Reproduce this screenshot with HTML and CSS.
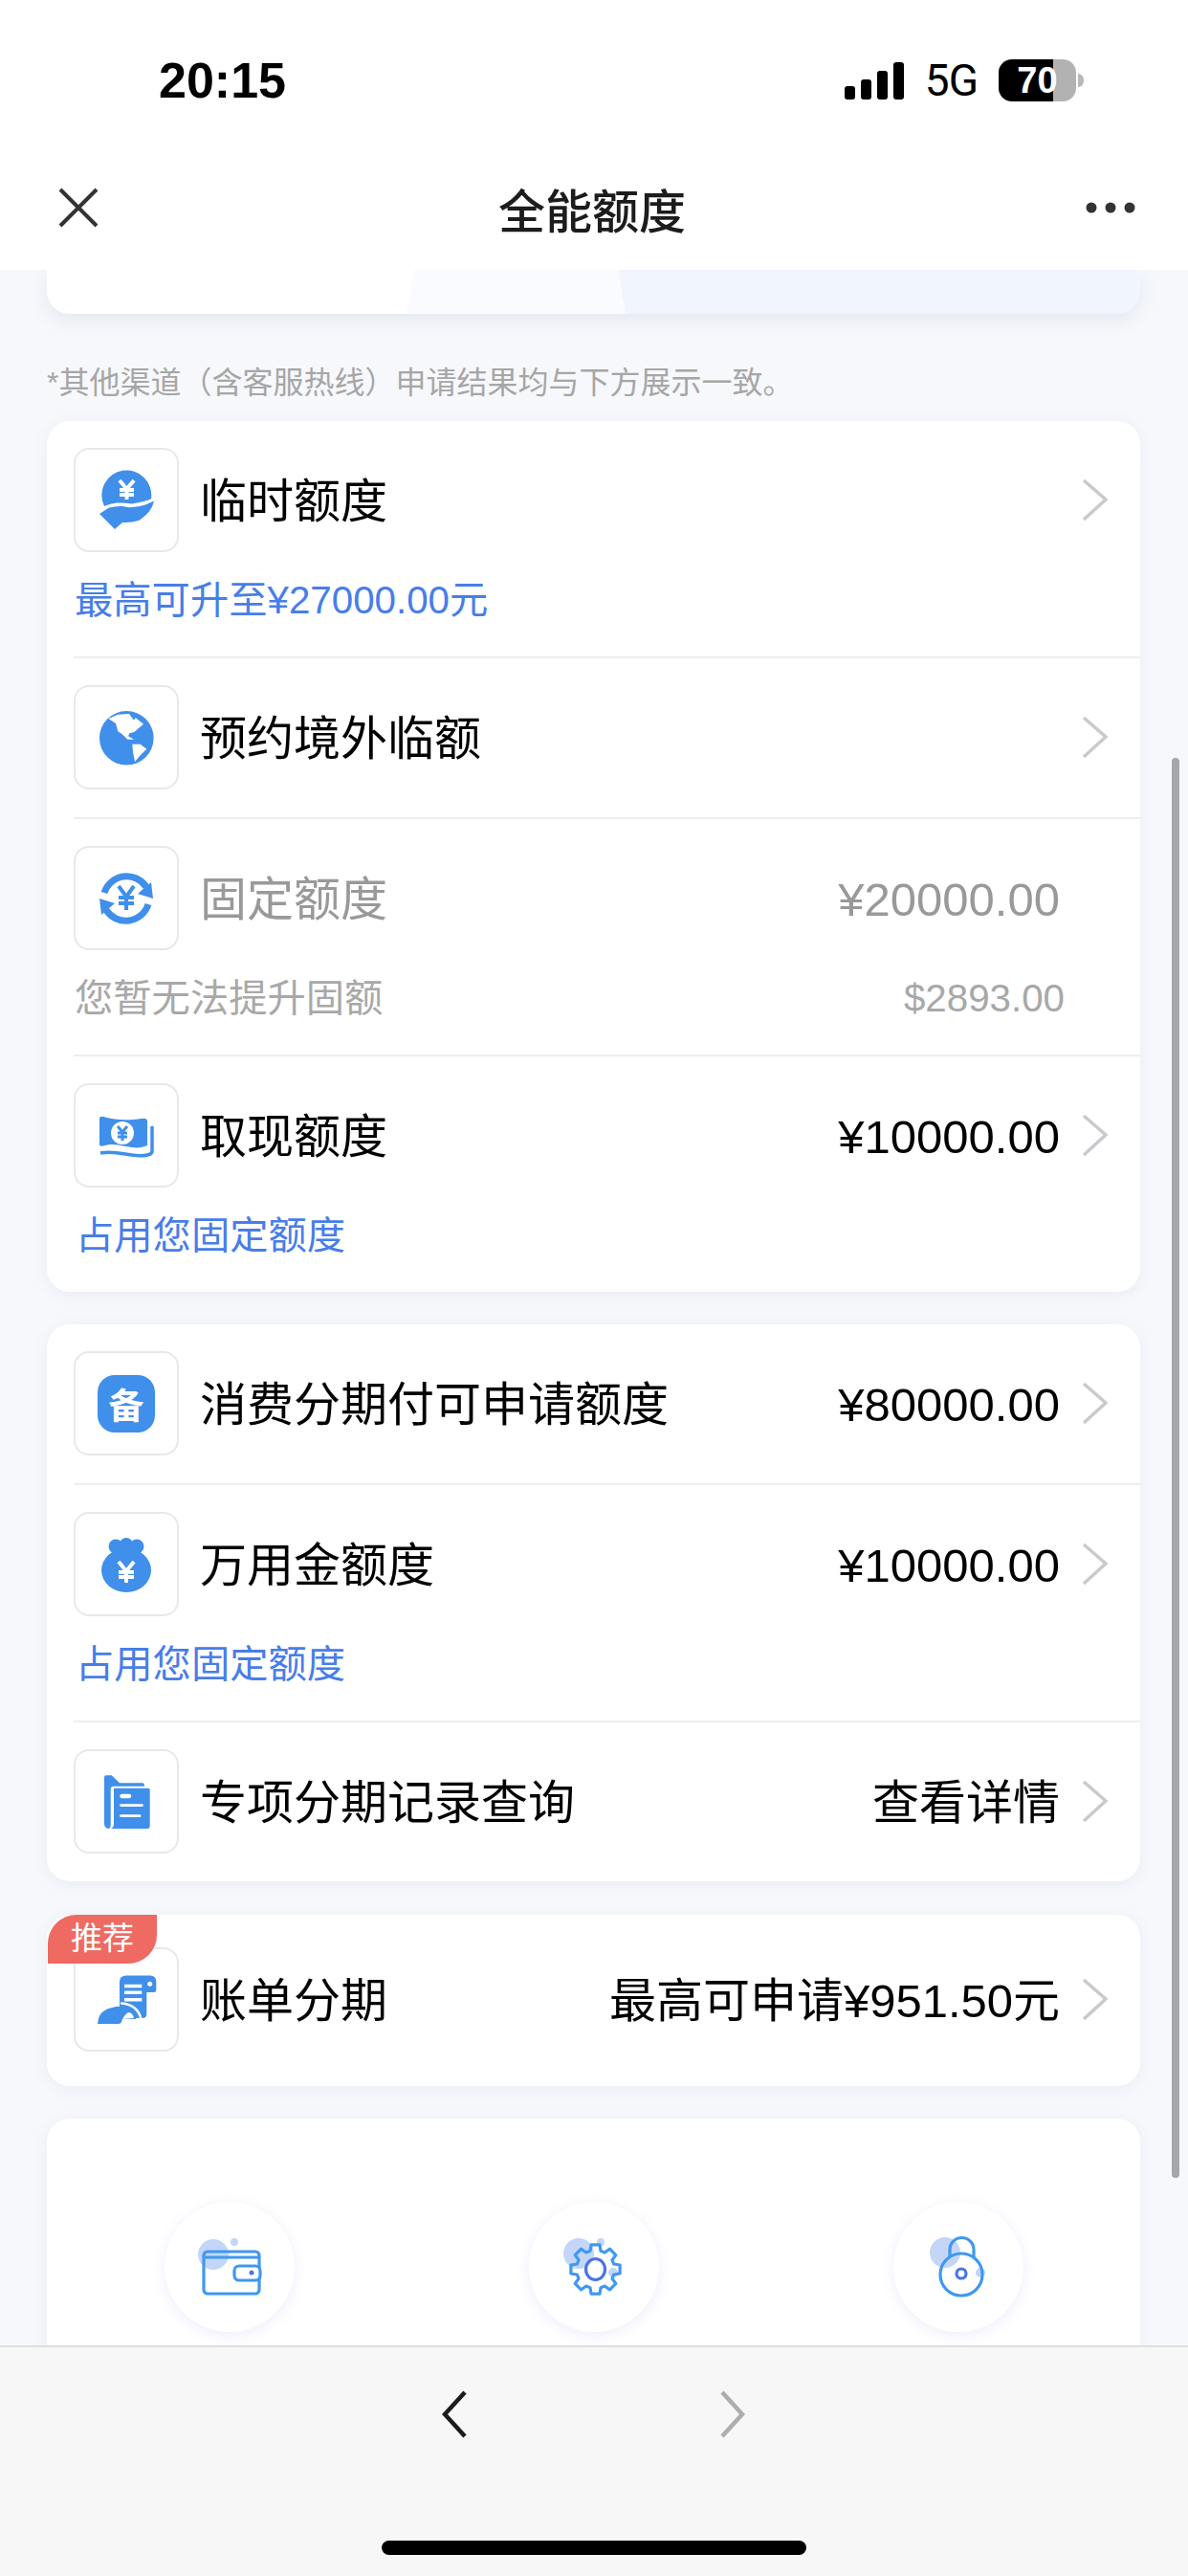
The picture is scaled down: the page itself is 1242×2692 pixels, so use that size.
FILE: index.html
```html
<!DOCTYPE html>
<html lang="zh">
<head>
  <meta charset="UTF-8">
  <title>全能额度</title>
  <link rel="stylesheet" href="styles.css">
</head>
<body>
  <div class="screen">
    <div class="status">
      <span class="time">20:15</span>
      <div class="status-right">
        <div class="signal"><i></i><i></i><i></i><i></i></div>
        <span class="net">5G</span>
        <div class="battery-wrap">
          <div class="battery">70</div>
          <div class="battery-tip"></div>
        </div>
      </div>
    </div>

    <div class="nav">
      <svg class="nav-close" viewBox="0 0 42 42"><path d="M2 2 40 40M40 2 2 40"/></svg>
      <span class="nav-title">全能额度</span>
      <svg class="nav-more" viewBox="0 0 52 12"><circle cx="6" cy="6" r="5.5"/><circle cx="26" cy="6" r="5.5"/><circle cx="46" cy="6" r="5.5"/></svg>
    </div>

    <div class="content">
      <div class="top-card"></div>
      <div class="note">*其他渠道（含客服热线）申请结果均与下方展示一致。</div>

      <div class="card">
        <div class="row">
          <div class="row-main">
            <div class="icon-box">
              <svg class="icon" viewBox="0 0 60 60">
                <path d="M7 36A26 26 0 1 1 56 28.500Q50 31 36 33.500 28 32 20 32.500 13 33 7 36Z"/>
                <path d="M2 44 12 37.500Q20 35.500 26 36 31 37.500 36 37 43 36.500 50 34.500L59 30.500Q58 36 54 41.500 48 48 43 51 35 53.500 26 53L18 60Z"/>
                <path class="yen" d="M23 9 30.500 18 38 9M30.500 18V29M23 19H38M23 24H38"/>
              </svg>
            </div>
            <span class="row-title">临时额度</span>
            <svg class="chev" viewBox="0 0 27 45"><path d="M2 2 25 22 2 43"/></svg>
          </div>
          <div class="row-sub"><span class="link">最高可升至¥27000.00元</span></div>
        </div>

        <div class="row">
          <div class="row-main">
            <div class="icon-box">
              <svg class="icon" viewBox="0 0 60 60">
                <circle cx="30.300" cy="30.300" r="28.300"/>
                <path class="land" d="M11.300 10 21.300 5.700 33 5 38 11.700 39.700 9 48 15.700 43 20 38 24.300 33.700 25 32 28.300 38 31.700 31.300 31.700 26.300 26.700 21.300 23.300 19 15Z"/>
                <path class="land" d="M36.300 36.700 44.700 36.700 51.300 41.700 44.700 48.300 39 55 37 45Z"/>
              </svg>
            </div>
            <span class="row-title">预约境外临额</span>
            <svg class="chev" viewBox="0 0 27 45"><path d="M2 2 25 22 2 43"/></svg>
          </div>
        </div>

        <div class="row">
          <div class="row-main">
            <div class="icon-box">
              <svg class="icon" viewBox="0 0 60 60">
                <path class="ring" d="M7 24A24.500 24.500 0 0 1 51 18"/>
                <path d="M58 30 42 25 56 13Z"/>
                <path class="ring" d="M53 36A24.500 24.500 0 0 1 9 42"/>
                <path d="M2 30 18 35 4 47Z"/>
                <path class="yen blue" d="M22 17 30 28 38 17M30 28V42M22 29H38M22 35H38"/>
              </svg>
            </div>
            <span class="row-title muted">固定额度</span>
            <span class="row-value muted">¥20000.00</span>
            <span class="chev-space"></span>
          </div>
          <div class="row-sub">
            <span class="sub-muted">您暂无法提升固额</span>
            <span class="sub-muted sub-amount">$2893.00</span>
          </div>
        </div>

        <div class="row">
          <div class="row-main">
            <div class="icon-box">
              <svg class="icon" viewBox="0 0 60 60">
                <path d="M2 12Q2 9 6 10C20 14 32 14 46 12Q52 11 52 15V40C38 47 22 36 8 40Q2 42 2 39Z"/>
                <path class="ring thin" d="M57 20V46Q57 49 52 50C36 54 22 44 3 48"/>
                <circle class="cut" cx="26" cy="27" r="12"/>
                <path class="yen blue small" d="M21 20 26 26 31 20M26 26V35M21 27H31M21 31H31"/>
              </svg>
            </div>
            <span class="row-title">取现额度</span>
            <span class="row-value">¥10000.00</span>
            <svg class="chev" viewBox="0 0 27 45"><path d="M2 2 25 22 2 43"/></svg>
          </div>
          <div class="row-sub"><span class="link link-indent">占用您固定额度</span></div>
        </div>
      </div>

      <div class="card">
        <div class="row">
          <div class="row-main">
            <div class="icon-box">
              <div class="bei">备</div>
            </div>
            <span class="row-title">消费分期付可申请额度</span>
            <span class="row-value">¥80000.00</span>
            <svg class="chev" viewBox="0 0 27 45"><path d="M2 2 25 22 2 43"/></svg>
          </div>
        </div>

        <div class="row">
          <div class="row-main">
            <div class="icon-box">
              <svg class="icon" viewBox="0 0 60 60">
                <circle cx="19" cy="11" r="7.500"/>
                <circle cx="30" cy="9" r="7"/>
                <circle cx="41" cy="11" r="7.500"/>
                <ellipse cx="30" cy="36" rx="26" ry="23"/>
                <path class="yen" d="M22 27 30 37 38 27M30 37V49M22 38H38M22 43H38"/>
              </svg>
            </div>
            <span class="row-title">万用金额度</span>
            <span class="row-value">¥10000.00</span>
            <svg class="chev" viewBox="0 0 27 45"><path d="M2 2 25 22 2 43"/></svg>
          </div>
          <div class="row-sub"><span class="link link-indent">占用您固定额度</span></div>
        </div>

        <div class="row">
          <div class="row-main">
            <div class="icon-box">
              <svg class="icon" viewBox="0 0 60 60">
                <path d="M7 4Q7 2.300 9 2.300H14.700L23 10.300H47Q49 10.300 49 13.700H17Q13.700 13.700 13.700 17V54Q13.700 58 11 58 7 57 7 53Z"/>
                <path d="M17 15.700H53Q54.700 15.700 54.700 17.500V55Q54.700 58 52 58H13.700Q17 57 17 53Z"/>
                <path class="doc-lines pill" d="M25.500 24H33"/>
                <path class="doc-lines" d="M24.500 33.600H46.500M24.500 44.700H44"/>
              </svg>
            </div>
            <span class="row-title">专项分期记录查询</span>
            <span class="row-value">查看详情</span>
            <svg class="chev" viewBox="0 0 27 45"><path d="M2 2 25 22 2 43"/></svg>
          </div>
        </div>
      </div>

      <div class="card card-bill">
        <span class="badge">推荐</span>
        <div class="row">
          <div class="row-main">
            <div class="icon-box">
              <svg class="icon" viewBox="0 0 60 60">
                <path d="M23 11Q23 4.500 30 4.500H55Q61.300 4.500 61.300 11V20Q61.300 22 59 22H51.300V45Q51.300 49 47 49H30L23 37Z"/>
                <path d="M0 55Q1 45 6 42 12 37 26 36.500 38 38 40 48V50H26L25 53Q24 55 22 55Z"/>
                <path class="bill-lines" d="M28 15.500H46.300M28 22.200H46.300M28 29.800H46.300"/>
                <path class="doc-lines thin" d="M25 33.500Q42 35 45.500 50"/>
                <path class="cut" d="M26 50Q30 43 33 43 37 44 38 49Z"/>
                <circle class="cut" cx="54.700" cy="13.200" r="2.500"/>
              </svg>
            </div>
            <span class="row-title">账单分期</span>
            <span class="row-value">最高可申请¥951.50元</span>
            <svg class="chev" viewBox="0 0 27 45"><path d="M2 2 25 22 2 43"/></svg>
          </div>
        </div>
      </div>

      <div class="card card-tools">
        <div class="tool">
          <svg class="tool-icon" viewBox="0 0 80 80">
            <circle class="blob" cx="23" cy="27" r="16"/>
            <circle class="blob" cx="45" cy="14" r="4"/>
            <rect class="line" x="13" y="24" width="58" height="44" rx="4"/>
            <path class="line" d="M13 30H71"/>
            <rect class="tool-clasp" x="45" y="39" width="27" height="15" rx="5"/>
            <circle class="dot" cx="63" cy="46" r="2.500"/>
          </svg>
        </div>
        <div class="tool">
          <svg class="tool-icon" viewBox="0 0 80 80">
            <circle class="blob" cx="24" cy="26" r="16"/>
            <circle class="blob" cx="60" cy="46" r="5"/>
            <circle class="blob" cx="47" cy="14" r="4"/>
            <path class="line" transform="translate(41.500 42.500)" d="M-4.500-25.600 4.500-25.600 5.500-19.200 9.700-17.500 14.900-21.300 21.300-14.900 17.500-9.700 19.200-5.500 25.600-4.500 25.600 4.500 19.200 5.500 17.500 9.700 21.300 14.900 14.900 21.300 9.700 17.500 5.500 19.200 4.500 25.600-4.500 25.600-5.500 19.200-9.700 17.500-14.900 21.300-21.300 14.900-17.500 9.700-19.200 5.500-25.600 4.500-25.600-4.500-19.200-5.500-17.500-9.700-21.300-14.900-14.900-21.300-9.700-17.500-5.500-19.200Z"/>
            <ellipse class="line-inner" cx="41.500" cy="42.500" rx="10" ry="11"/>
          </svg>
        </div>
        <div class="tool">
          <svg class="tool-icon" viewBox="0 0 80 80">
            <circle class="blob" cx="26" cy="25" r="16"/>
            <circle class="blob" cx="63" cy="46" r="5"/>
            <path class="line" d="M31 30V22A12.500 12.500 0 0 1 56 22V30"/>
            <circle class="line" cx="43" cy="48" r="22"/>
            <circle class="line-inner" cx="43" cy="47" r="5"/>
          </svg>
        </div>
      </div>
    </div>

    <div class="scroll-thumb"></div>

    <div class="footer">
      <div class="footer-nav">
        <svg class="footer-chev" viewBox="0 0 26 50"><path d="M24 2 3 25 24 48"/></svg>
        <svg class="footer-chev off" viewBox="0 0 26 50"><path d="M2 2 23 25 2 48"/></svg>
      </div>
      <div class="home-bar"></div>
    </div>
  </div>
</body>
</html>
```

FILE: styles.css
```css
* {
  box-sizing: border-box;
}

html, body {
  margin: 0;
  padding: 0;
}

body {
  font-family: "Liberation Sans", "Noto Sans CJK SC", sans-serif;
  color: #000;
}

.screen {
  position: relative;
  width: 1242px;
  height: 2692px;
  display: flex;
  flex-direction: column;
  overflow: hidden;
  background: #f6f8fc;
}

/* status bar */
.status {
  height: 152px;
  padding: 16px 109px 0 166px;
  display: flex;
  align-items: center;
  justify-content: space-between;
  background: #fff;
}

.time {
  font-size: 52px;
  font-weight: bold;
}

.status-right {
  display: flex;
  align-items: center;
  gap: 22px;
}

.signal {
  display: flex;
  align-items: flex-end;
  gap: 6px;
  height: 39px;
}

.signal i {
  width: 11px;
  border-radius: 3px;
  background: #000;
}

.signal i:nth-child(1) { height: 14px; }
.signal i:nth-child(2) { height: 21px; }
.signal i:nth-child(3) { height: 30px; }
.signal i:nth-child(4) { height: 39px; }

.net {
  font-family: Roboto, sans-serif;
  font-size: 46px;
  letter-spacing: -1px;
}

.battery-wrap {
  display: flex;
  align-items: center;
  gap: 2px;
}

.battery {
  width: 81px;
  height: 44px;
  border-radius: 14px;
  display: flex;
  align-items: center;
  justify-content: center;
  background: linear-gradient(90deg, #000 57px, #b2b2b2 57px);
  color: #fff;
  font-size: 38px;
  font-weight: bold;
}

.battery-tip {
  width: 6px;
  height: 14px;
  border-radius: 0 6px 6px 0;
  background: #b8b8b8;
}

/* nav bar */
.nav {
  height: 130px;
  padding: 0 55px 0 61px;
  display: flex;
  align-items: center;
  justify-content: space-between;
  background: #fff;
  position: relative;
  z-index: 2;
}

.nav-close {
  width: 42px;
  height: 42px;
  fill: none;
  stroke: #333;
  stroke-width: 4;
}

.nav-title {
  font-size: 49px;
  font-weight: 500;
  color: #1c1c1c;
}

.nav-more {
  width: 52px;
  height: 12px;
  fill: #333;
}

/* scrolling area */
.content {
  flex: 1;
  min-height: 0;
  padding: 0 50px 0 49px;
  overflow: hidden;
}

.top-card {
  height: 46px;
  border-radius: 0 0 24px 24px;
  background:
    linear-gradient(80deg, transparent 596px, #f1f5fd 596px),
    linear-gradient(100deg, #fff 378px, #f9fbfe 378px);
  box-shadow: 0 6px 20px rgba(70, 85, 120, 0.1);
}

.note {
  margin: 47px 0 15px;
  height: 50px;
  line-height: 50px;
  font-size: 32px;
  color: #a6a6a6;
}

.card {
  position: relative;
  margin-bottom: 34px;
  border-radius: 24px;
  background: #fff;
  box-shadow: 0 3px 16px rgba(70, 85, 120, 0.07);
}

.row {
  margin-left: 28px;
  padding: 28px 34px 33px 0;
}

.row + .row {
  border-top: 2px solid #eeeeee;
}

.row-main {
  display: flex;
  align-items: center;
}

.row-main:only-child {
  margin-bottom: -4px;
}

.icon-box {
  flex-shrink: 0;
  width: 110px;
  height: 109px;
  margin-right: 22px;
  border: 2px solid #e8e8e8;
  border-radius: 16px;
  display: flex;
  align-items: center;
  justify-content: center;
  background: #fff;
}

.icon {
  width: 60px;
  height: 60px;
  fill: #408fea;
  overflow: visible;
}

.icon .cut { fill: #fff; }
.icon .land { fill: #fff; }

.icon .yen {
  fill: none;
  stroke: #fff;
  stroke-width: 4;
}

.icon .yen.blue { stroke: #408fea; }
.icon .yen.small { stroke-width: 3; }

.icon .ring {
  fill: none;
  stroke: #408fea;
  stroke-width: 7;
}

.icon .ring.thin { stroke-width: 3.5; }

.icon .doc-lines {
  fill: none;
  stroke: #fff;
  stroke-width: 2.8;
  stroke-linecap: round;
}

.icon .doc-lines.pill { stroke-width: 4.5; }
.icon .doc-lines.thin { stroke-width: 2.5; }

.icon .bill-lines {
  fill: none;
  stroke: #fff;
  stroke-width: 3.6;
}

.bei {
  width: 60px;
  height: 60px;
  border-radius: 18px;
  display: flex;
  align-items: center;
  justify-content: center;
  background: #408fea;
  color: #fff;
  font-size: 37px;
  font-weight: bold;
}

.row-title {
  flex: 1;
  padding-top: 2px;
  font-size: 49px;
  line-height: 60px;
}

.row-value {
  margin-right: 23px;
  padding-top: 2px;
  font-size: 49px;
  line-height: 60px;
}

.muted {
  color: #999;
}

.chev {
  flex-shrink: 0;
  width: 27px;
  height: 45px;
  fill: none;
  stroke: #c9c9ce;
  stroke-width: 3.5;
}

.chev-space {
  width: 27px;
}

.row-sub {
  margin-top: 26px;
  height: 50px;
  line-height: 50px;
  display: flex;
  justify-content: space-between;
  font-size: 40.3px;
}

.link {
  margin-left: 1px;
  color: #477ee8;
}

.link-indent {
  margin-left: 2px;
}

.sub-muted {
  margin-left: 1px;
  color: #a8a8a8;
}

.sub-amount {
  margin-right: 45px;
}

.badge {
  position: absolute;
  top: 0;
  left: 1px;
  z-index: 1;
  width: 114px;
  height: 51px;
  border-radius: 30px 0 30px 0;
  line-height: 50px;
  text-align: center;
  background: #ee6a63;
  color: #fff;
  font-size: 33px;
}

.card-bill {
  margin-top: 35px;
}

.card-bill .row {
  padding-top: 34px;
  padding-bottom: 40px;
}

.card-tools {
  height: 400px;
  padding-top: 87px;
  display: flex;
  align-items: flex-start;
}

.tool {
  width: 136px;
  height: 136px;
  border-radius: 50%;
  display: flex;
  align-items: center;
  justify-content: center;
  background: #fff;
  box-shadow: 0 3px 14px rgba(110, 120, 235, 0.13);
  margin-left: 245px;
}

.tool:first-child {
  margin-left: 123px;
}

.tool-icon {
  width: 80px;
  height: 80px;
}

.blob {
  fill: #c3d6f8;
}

.line {
  fill: none;
  stroke: #3f98f0;
  stroke-width: 3.2;
  stroke-linejoin: round;
}

.line-inner {
  fill: none;
  stroke: #4b74e4;
  stroke-width: 3.2;
}

.tool-clasp {
  fill: #fff;
  stroke: #3f98f0;
  stroke-width: 3.2;
}

.dot {
  fill: #4b74e4;
}

.scroll-thumb {
  position: absolute;
  top: 792px;
  right: 9px;
  width: 8px;
  height: 1484px;
  border-radius: 4px;
  background: #a6a7aa;
}

/* bottom toolbar */
.footer {
  height: 241px;
  border-top: 2px solid #dedede;
  display: flex;
  flex-direction: column;
  background: #f7f7f7;
  position: relative;
  z-index: 2;
}

.footer-nav {
  display: flex;
  gap: 265px;
  padding: 45px 0 0 462px;
}

.footer-chev {
  width: 26px;
  height: 50px;
  fill: none;
  stroke: #1c1c1c;
  stroke-width: 4.5;
}

.footer-chev.off {
  stroke: #adadad;
}

.home-bar {
  align-self: center;
  width: 444px;
  height: 15px;
  margin-top: 107px;
  border-radius: 8px;
  background: #000;
}
```
